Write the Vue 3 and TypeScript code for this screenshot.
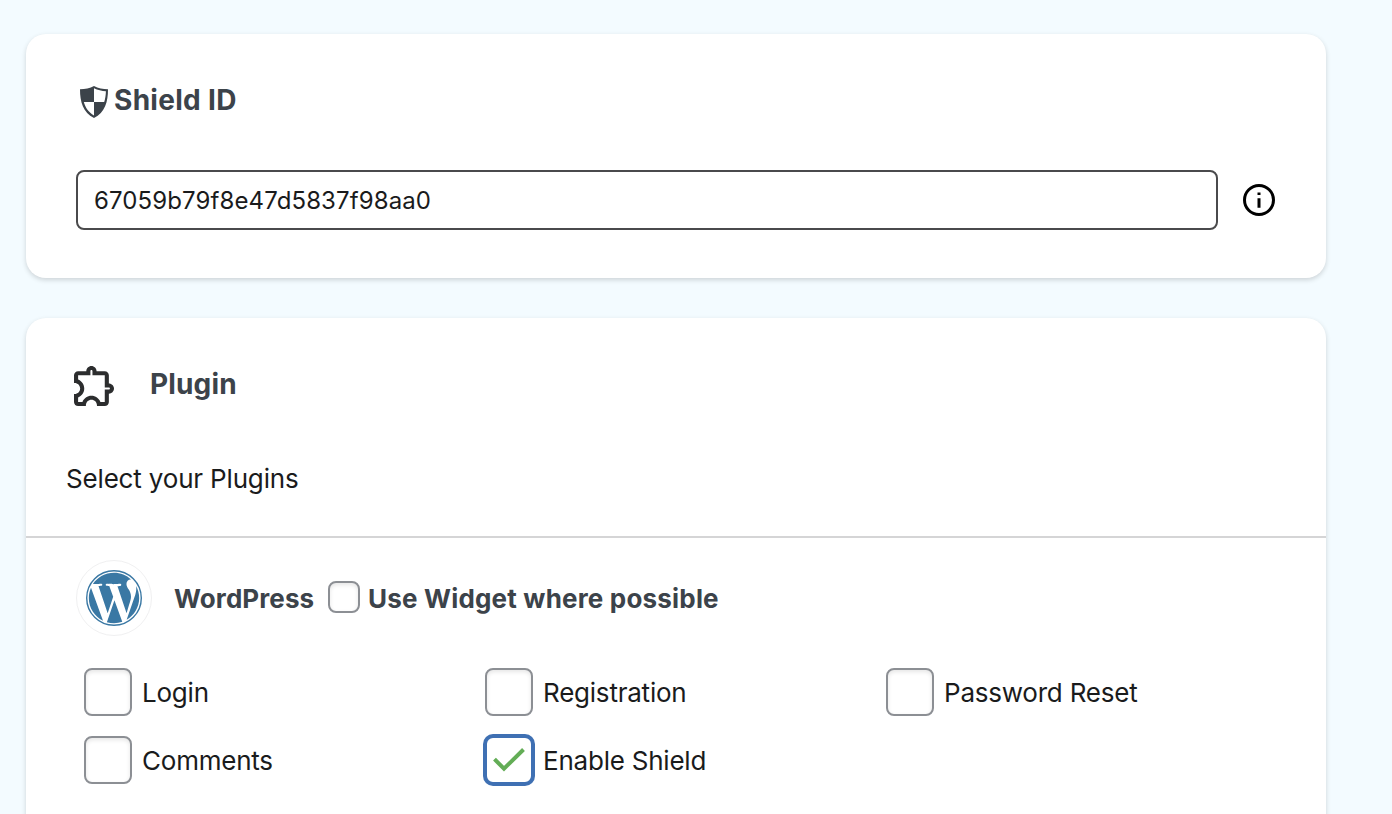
<script setup lang="ts">
import { ref } from 'vue'

interface Option {
  label: string
  checked: boolean
}

const shieldId = ref('67059b79f8e47d5837f98aa0')
const useWidget = ref(false)
const options = ref<Option[]>([
  { label: 'Login', checked: false },
  { label: 'Registration', checked: false },
  { label: 'Password Reset', checked: false },
  { label: 'Comments', checked: false },
  { label: 'Enable Shield', checked: true },
])
</script>

<template>
  <main class="page">
    <section class="card shield-card">
      <header class="shield-head">
        <svg class="shield-icon" viewBox="0 0 28 32">
          <path d="M14 0C10 2.3 5 3.2 0 3.3C0 16 3 26.5 14 32C25 26.5 28 16 28 3.3C23 3.2 18 2.3 14 0Z" fill="#3c434a" />
          <path d="M14 2.3C17.8 4.2 21.8 5 25.9 5.2C25.8 9 25.3 12.7 24.2 16H14ZM14 16V29.4C8.6 26.3 5.4 21.6 3.8 16Z" fill="#fff" />
        </svg>
        <h2 class="title">Shield ID</h2>
      </header>
      <div class="field-row">
        <input v-model="shieldId" class="field" type="text" aria-label="Shield ID" />
        <svg class="info" viewBox="0 0 32 32">
          <circle cx="16" cy="16" r="14.5" fill="none" stroke="#000" stroke-width="3" />
          <path d="M14.500 8.400h3v2.600h-3zM14.500 14.200h3v9.600h-3z" fill="#000" />
        </svg>
      </div>
    </section>

    <section class="card plugin-card">
      <header class="plugin-head">
        <svg class="puzzle" viewBox="2 2.5 19.5 19.5">
          <path
            fill="#2c2d2e"
            fill-rule="evenodd"
            d="M10.500 4.500c.28 0 .5.22.5.5v2h6v6h2c.28 0 .5.22.5.5s-.22.5-.5.5h-2v6h-2.120c-.68-1.750-2.390-3-4.380-3s-3.700 1.250-4.380 3H4v-2.120c1.750-.68 3-2.390 3-4.380 0-1.990-1.240-3.700-2.990-4.380L4 7h6V5c0-.28.22-.5.5-.5m0-2C9.120 2.500 8 3.620 8 5H4c-1.100 0-1.990.9-1.990 2v3.800h.29c1.490 0 2.700 1.210 2.700 2.700s-1.210 2.700-2.700 2.700H2V20c0 1.100.9 2 2 2h3.800v-.3c0-1.490 1.210-2.700 2.700-2.700s2.700 1.210 2.700 2.700v.3H17c1.100 0 2-.9 2-2v-4c1.380 0 2.500-1.120 2.500-2.500S20.380 11 19 11V7c0-1.100-.9-2-2-2h-4c0-1.380-1.120-2.500-2.500-2.500z"
          />
        </svg>
        <h2 class="title plugin-title">Plugin</h2>
      </header>
      <p class="intro">Select your Plugins</p>
      <div class="group">
        <div class="group-head">
          <span class="logo">
            <svg viewBox="0 0 24 24">
              <circle cx="12" cy="12" r="11.7" fill="none" stroke="#3a78a4" stroke-width=".6" />
              <path
                fill="#3a78a4"
                d="M21.469 6.825c.84 1.537 1.318 3.3 1.318 5.175 0 3.979-2.156 7.456-5.363 9.325l3.295-9.527c.615-1.54.82-2.771.82-3.864 0-.405-.026-.78-.07-1.11m-7.981.105c.647-.03 1.232-.105 1.232-.105.582-.075.514-.93-.067-.899 0 0-1.755.135-2.88.135-1.064 0-2.85-.15-2.85-.15-.585-.03-.661.855-.075.885 0 0 .54.061 1.125.09l1.68 4.605-2.37 7.08L5.354 6.9c.649-.03 1.234-.1 1.234-.1.585-.075.516-.93-.065-.896 0 0-1.746.138-2.874.138-.2 0-.438-.008-.69-.015C4.911 3.15 8.235 1.215 12 1.215c2.809 0 5.365 1.072 7.286 2.833-.046-.003-.091-.009-.141-.009-1.06 0-1.812.923-1.812 1.914 0 .89.513 1.643 1.06 2.531.411.72.89 1.643.89 2.977 0 .915-.354 1.994-.821 3.479l-1.075 3.585-3.9-11.61zM12 22.784c-1.059 0-2.081-.153-3.048-.437l3.237-9.406 3.315 9.087c.024.053.05.101.078.149-1.12.393-2.325.609-3.582.609M1.211 12c0-1.564.336-3.05.935-4.39L7.29 21.709C3.694 19.96 1.212 16.271 1.211 12"
              />
            </svg>
          </span>
          <h3 class="group-title">WordPress</h3>
          <label class="widget">
            <input v-model="useWidget" class="check small" type="checkbox" />
            <span>Use Widget where possible</span>
          </label>
        </div>
        <div class="options">
          <label v-for="option in options" :key="option.label" class="option">
            <span class="box" :class="{ on: option.checked }">
              <input v-model="option.checked" class="check" type="checkbox" />
              <svg v-if="option.checked" class="tick" viewBox="0 0 32 24">
                <path d="M1.5 11.2L11 20.700L30.500 1.500" fill="none" stroke="#63ad56" stroke-width="4" />
              </svg>
            </span>
            <span class="option-label">{{ option.label }}</span>
          </label>
        </div>
      </div>
    </section>
  </main>
</template>

<style>
html,
body {
  margin: 0;
  overflow: hidden;
  background: #f3fbff;
}
</style>

<style scoped>
.page {
  box-sizing: border-box;
  height: 814px;
  overflow: hidden;
  padding: 34px 66px 0 26px;
  background: #f3fbff;
  color: #1a1b1c;
  font-family: Inter, "Liberation Sans", sans-serif;
  font-size: 26px;
}
.card {
  box-sizing: border-box;
  background: #fff;
  border-radius: 20px;
  box-shadow: 0 2px 5px rgba(0, 0, 0, 0.16);
}
.shield-card {
  height: 244px;
  padding: 48px 50px 0;
}
.plugin-card {
  height: 560px;
  margin-top: 40px;
  padding-top: 46px;
}
.shield-head {
  display: flex;
  align-items: center;
  height: 36px;
  padding-left: 4px;
}
.shield-icon {
  width: 28px;
  height: 32px;
  margin: 4px 6px 0 0;
}
.title,
.group-title,
.intro {
  margin: 0;
}
.title {
  color: #3c434a;
  font-size: 28px;
  font-weight: 700;
  line-height: 36px;
  letter-spacing: 0.3px;
}
.plugin-title {
  letter-spacing: 0.15px;
}
.field-row {
  display: flex;
  align-items: center;
  gap: 25px;
  margin-top: 52px;
}
.field {
  box-sizing: border-box;
  width: 1142px;
  height: 60px;
  padding: 0 16px;
  border: 2px solid #4a4a4c;
  border-radius: 8px;
  outline: none;
  background: #fff;
  color: #1a1b1c;
  font: inherit;
  font-size: 24px;
  letter-spacing: 0.11px;
}
.info {
  width: 32px;
  height: 32px;
}
.plugin-head {
  display: flex;
  align-items: center;
  height: 40px;
  padding-left: 48px;
}
.puzzle {
  width: 40px;
  height: 40px;
  margin: 4px 36px 0 0;
}
.intro {
  margin: 57px 0 0 40px;
  line-height: 36px;
  letter-spacing: -0.17px;
}
.group {
  margin-top: 39px;
  border-top: 2px solid #d5d5d6;
}
.group-head {
  display: flex;
  align-items: center;
  height: 76px;
  padding: 22px 50px 0;
  color: #3c434a;
  font-weight: 700;
}
.logo {
  box-sizing: border-box;
  display: grid;
  place-items: center;
  width: 76px;
  height: 76px;
  border: 1px solid #f0f0f1;
  border-radius: 50%;
}
.logo svg {
  width: 56px;
  height: 56px;
}
.group-title {
  width: 140px;
  margin-left: 22px;
  font-size: 26px;
  letter-spacing: 0.1px;
}
.widget,
.option {
  display: flex;
  align-items: center;
}
.widget {
  margin-left: 14px;
  letter-spacing: 0.19px;
}
.check {
  appearance: none;
  box-sizing: border-box;
  width: 48px;
  height: 48px;
  margin: 0;
  border: 2px solid #8c8f94;
  border-radius: 8px;
  background: #fff;
  box-shadow: inset 0 2px 4px rgba(0, 0, 0, 0.1);
}
.check.small {
  width: 32px;
  height: 32px;
  margin: 0 8px 2px 0;
}
.options {
  display: grid;
  grid-template-columns: repeat(3, 401px);
  gap: 20px 0;
  margin: 32px 0 0 58px;
}
.option {
  height: 48px;
}
.box {
  position: relative;
  width: 48px;
  height: 48px;
}
.box .check {
  display: block;
}
.box.on .check {
  border-color: #3f70b3;
  box-shadow: 0 0 0 2px #3f70b3;
}
.tick {
  position: absolute;
  left: 8px;
  top: 12px;
  width: 32px;
  height: 24px;
}
.option-label {
  margin-left: 10px;
  letter-spacing: -0.22px;
}
</style>
